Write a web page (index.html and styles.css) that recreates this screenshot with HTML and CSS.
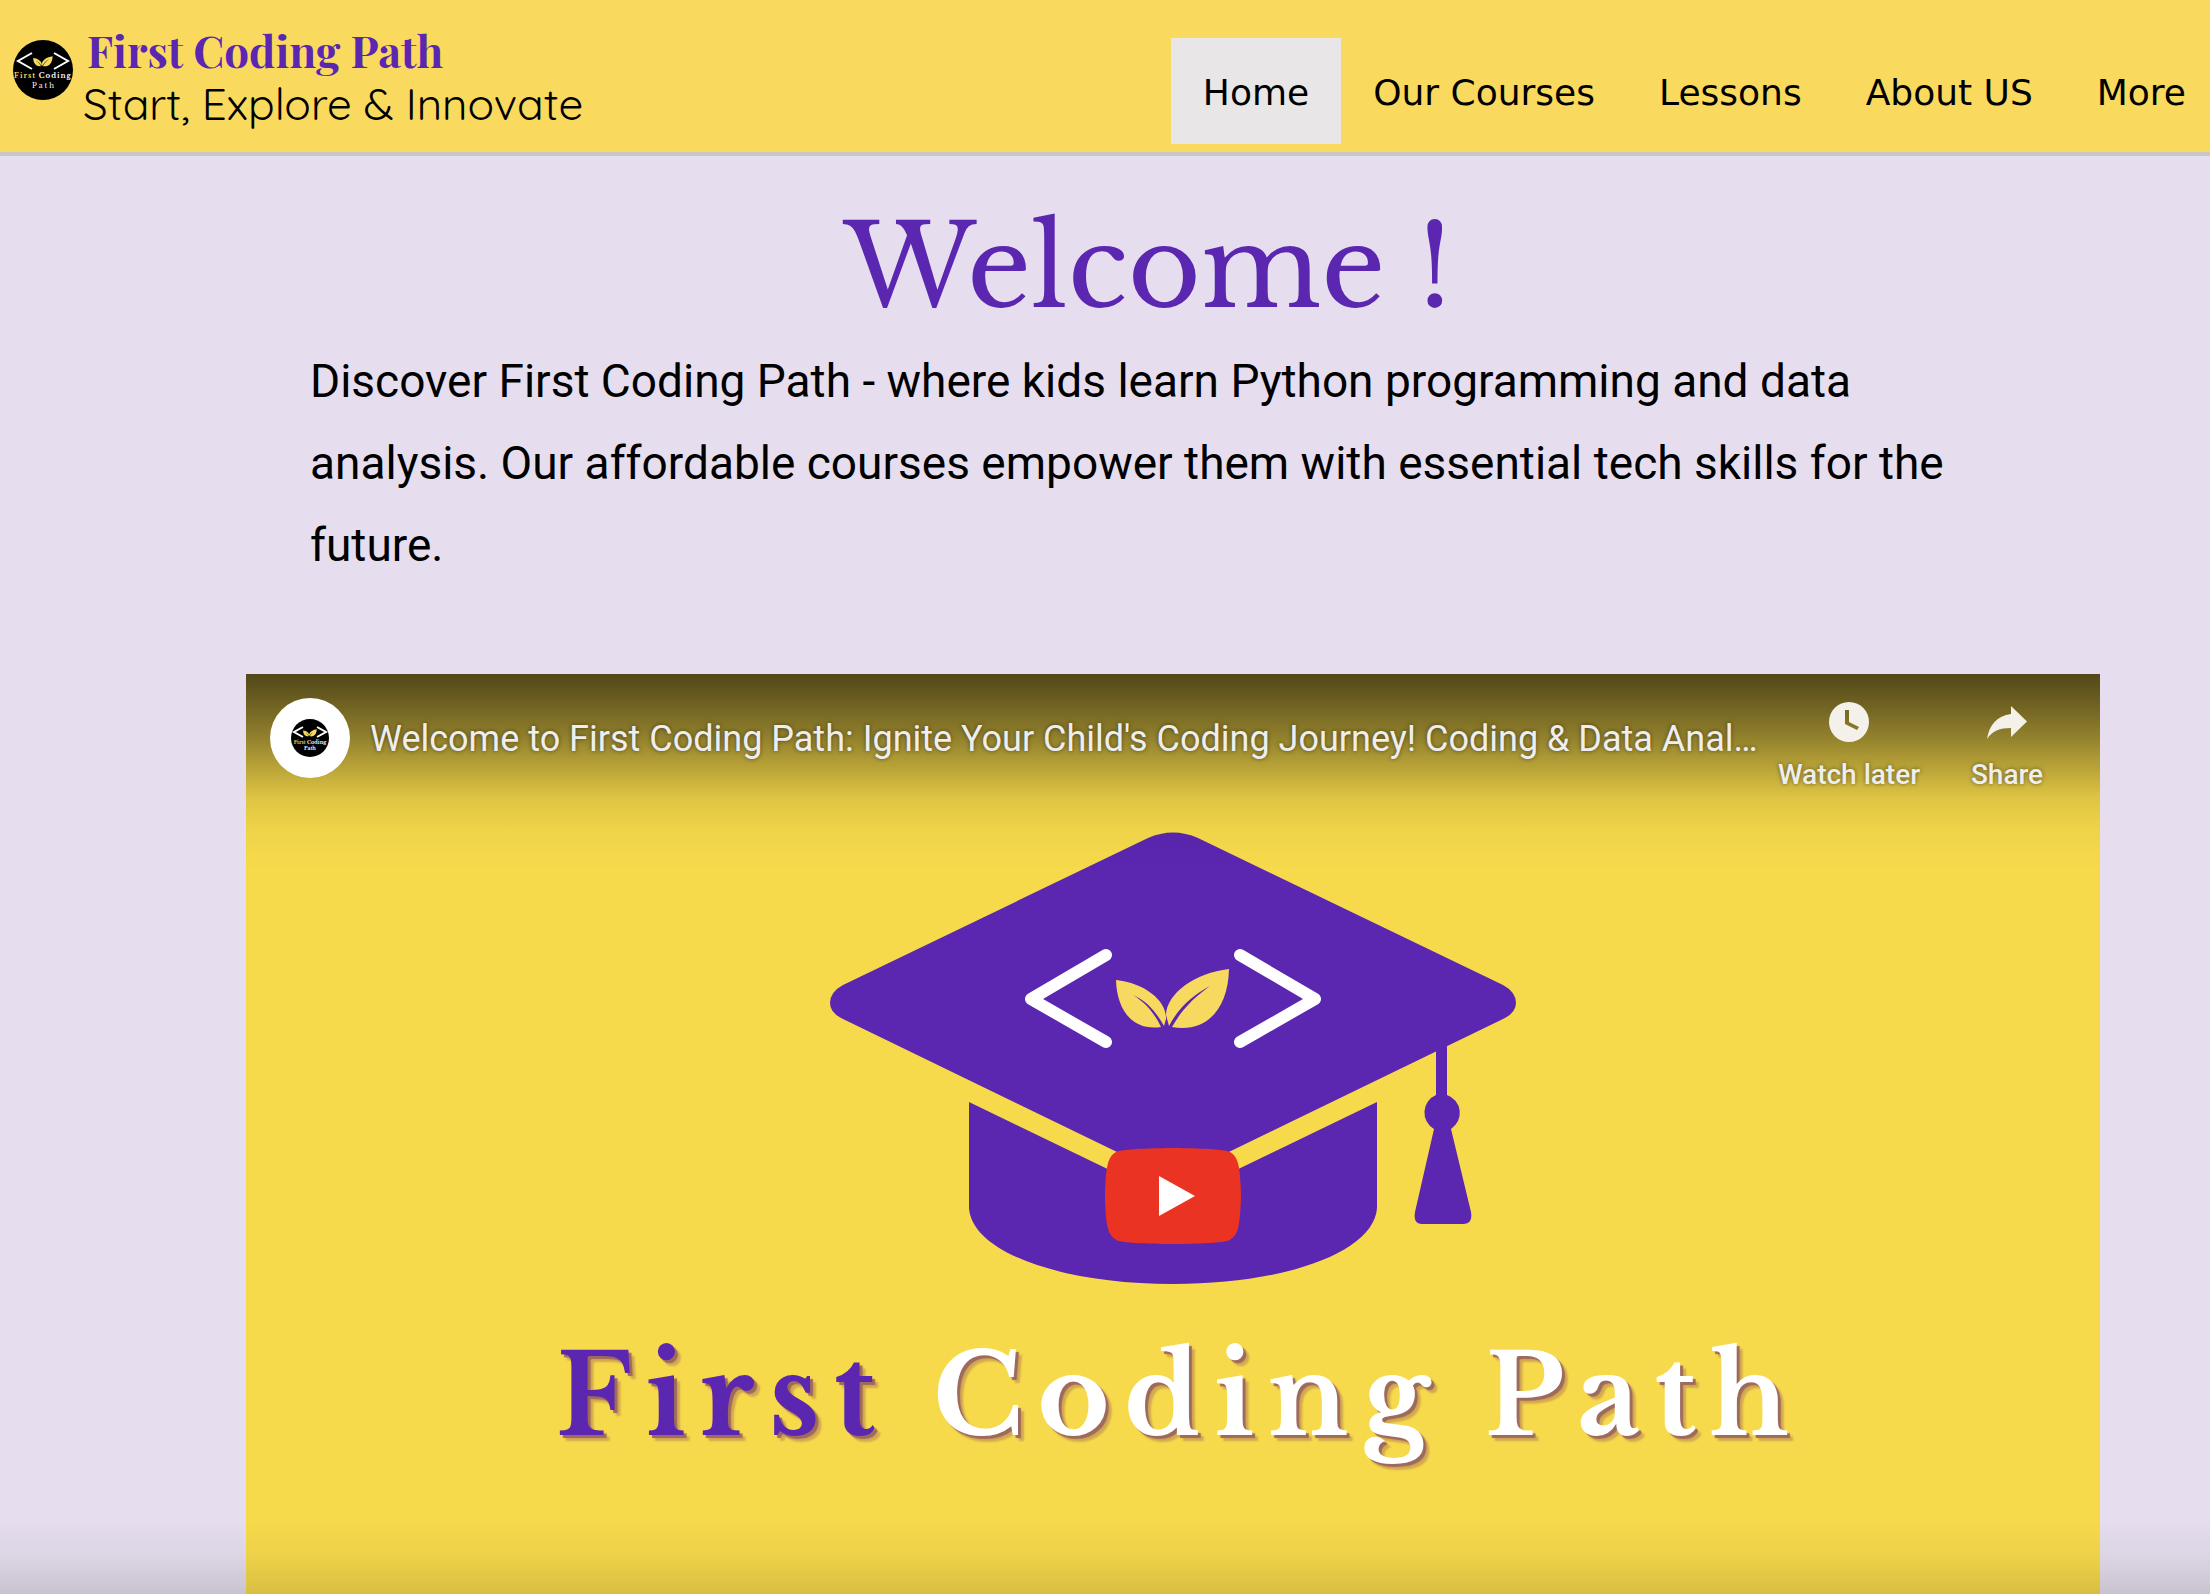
FILE: index.html
```html
<!DOCTYPE html>
<html lang="en">
<head>
<meta charset="utf-8">
<title>First Coding Path</title>
<link rel="stylesheet" href="styles.css">
</head>
<body>
<svg class="defs" aria-hidden="true">
  <symbol id="sprout" viewBox="0 0 116 62">
    <path d="M1 11C30 14 52 32 51 50L49 57C42 44 32 32 18 26C31 34 40 45 46 58C20 62 2 44 1 11Z"/>
    <path d="M114 0C80 4 52 24 51 46L54 57C64 38 78 26 95 17C78 29 66 42 57 58C90 64 113 42 114 0Z"/>
  </symbol>
</svg>
<header class="site-header">
  <a class="brand" href="#">
    <svg class="brand-logo" viewBox="0 0 60 60" aria-hidden="true">
      <circle cx="30" cy="30" r="30" fill="#000"/>
      <path d="M19 13L5 21L19 29M41 13L55 21L41 29" fill="none" stroke="#fff" stroke-width="2"/>
      <use href="#sprout" x="20" y="16" width="20" height="11" fill="#f8d95f"/>
      <text class="badge-text" x="30" y="38"><tspan fill="#f8d95f">First</tspan> Coding</text>
      <text class="badge-text badge-thin" x="31" y="48">Path</text>
    </svg>
    <span class="brand-words">
      <span class="brand-name">First Coding Path</span>
      <span class="brand-tagline">Start, Explore &amp; Innovate</span>
    </span>
  </a>
  <nav class="site-nav">
    <a class="nav-link is-current" href="#" aria-current="page">Home</a>
    <a class="nav-link" href="#">Our Courses</a>
    <a class="nav-link" href="#">Lessons</a>
    <a class="nav-link" href="#">About US</a>
    <a class="nav-link" href="#">More</a>
  </nav>
</header>
<main class="page">
  <h1 class="welcome">Welcome !</h1>
  <p class="intro">Discover First Coding Path - where kids learn Python programming and data analysis. Our affordable courses empower them with essential tech skills for the future.</p>
  <section class="video" aria-label="Video player">
    <svg class="poster" viewBox="0 0 1854 1043" role="img" aria-label="Graduation cap with the words First Coding Path">
      <g fill="#5b26b0">
        <path d="M902 164Q927 153 952 164L1257 311Q1270 318 1270 329Q1270 339 1257 345L952 493Q927 504 902 493L597 345Q584 339 584 329Q584 318 597 311Z"/>
        <path d="M723 428L903 515Q927 524 951 515L1131 428V534C1128 578 1040 610 927 610C814 610 726 578 723 534Z"/>
        <path d="M1190 365H1201V421A19 19 0 0 1 1205 455L1225 538Q1227 550 1217 550H1176Q1167 550 1169 538L1188 455A19 19 0 0 1 1190 421Z"/>
      </g>
      <path d="M860 281L785 325L860 368M994 281L1069 325L994 368" fill="none" stroke="#fff" stroke-width="12" stroke-linecap="round" stroke-linejoin="round"/>
      <use href="#sprout" x="869" y="295" width="116" height="62" fill="#f8d95f"/>
      <text class="poster-title" x="310" y="761"><tspan fill="#5b26b0">First</tspan> Coding Path</text>
    </svg>
    <div class="video-bar">
      <svg class="avatar" viewBox="0 0 80 80" aria-hidden="true">
        <circle cx="40" cy="40" r="40" fill="#fff"/>
        <circle cx="40" cy="40" r="19" fill="#000"/>
        <path d="M33 29L24 34L33 39M47 29L56 34L47 39" fill="none" stroke="#fff" stroke-width="2"/>
        <use href="#sprout" x="33" y="31" width="14" height="8" fill="#f8d95f"/>
        <text class="avatar-text" x="40" y="46"><tspan fill="#f8d95f">First</tspan> Coding</text>
        <text class="avatar-text" x="40" y="52">Path</text>
      </svg>
      <a class="video-title" href="#">Welcome to First Coding Path: Ignite Your Child's Coding Journey! Coding &amp; Data Analysis for Kids</a>
      <button class="video-action" type="button">
        <svg class="action-icon" viewBox="0 0 48 48" aria-hidden="true"><path fill-rule="evenodd" d="M24 4a20 20 0 1 0 0 40a20 20 0 1 0 0-40ZM20 12h4v12l10 5-2 3-12-6Z"/></svg>
        Watch later
      </button>
      <button class="video-action" type="button">
        <svg class="action-icon" viewBox="0 0 48 48" aria-hidden="true"><path d="M28 8L44 23.500L28 39V30C17 30 9 33 4 41C6 27 14 18 28 16Z"/></svg>
        Share
      </button>
    </div>
    <button class="play" type="button" aria-label="Play">
      <svg class="play-icon" viewBox="0 0 68 48" aria-hidden="true"><path fill="#ea3323" d="M66.520 7.740c-.78-2.930-2.490-5.410-5.420-6.190C55.790.130 34 0 34 0S12.210.130 6.900 1.550c-2.930.780-4.630 3.260-5.420 6.190C.060 13.050 0 24 0 24s.060 10.950 1.480 16.260c.780 2.930 2.490 5.410 5.420 6.190C12.210 47.870 34 48 34 48s21.790-.130 27.100-1.550c2.930-.780 4.640-3.260 5.420-6.190C67.940 34.950 68 24 68 24s-.060-10.950-1.480-16.260z"/><path fill="#fff" d="M45 24L27 14v20"/></svg>
    </button>
  </section>
</main>
</body>
</html>
```
FILE: styles.css
```css
* {
  box-sizing: border-box;
}

body {
  margin: 0;
  height: 100vh;
  overflow: hidden;
  background: #e6deee;
  color: #000;
  font-family: Roboto, sans-serif;
}

/* soft shade along the bottom edge of the window */
body::after {
  content: "";
  position: fixed;
  inset: auto 0 0;
  height: 76px;
  background: linear-gradient(transparent, rgb(0 0 0 / 4%) 50%, rgb(0 0 0 / 12%));
  pointer-events: none;
}

a {
  color: inherit;
  text-decoration: none;
}

button {
  border: 0;
  padding: 0;
  background: none;
  cursor: pointer;
}

.defs {
  position: absolute;
  width: 0;
  height: 0;
}

.badge-text {
  fill: #fff;
  font: bold 7px "Libre Baskerville", "Liberation Serif", serif;
  letter-spacing: 1px;
  text-anchor: middle;
}

.badge-thin {
  font-weight: normal;
  letter-spacing: 2px;
}

.avatar-text {
  fill: #fff;
  font: bold 5px "Libre Baskerville", "Liberation Serif", serif;
  text-anchor: middle;
}

.site-header {
  display: flex;
  justify-content: space-between;
  height: 156px;
  background: #f9d95e;
  border-bottom: 4px solid #c8c8c8;
}

.brand {
  display: flex;
  gap: 10px;
  padding: 24px 0 0 13px;
}

.brand-logo {
  width: 60px;
  height: 60px;
  margin-top: 16px;
}

.brand-words {
  display: flex;
  flex-direction: column;
  white-space: nowrap;
}

.brand-name {
  padding-left: 4px;
  color: #5b26b0;
  font: bold 44px/52px "Playfair Display", "Liberation Serif", serif;
}

.brand-tagline {
  font: 400 44px/56px Quicksand, Lato, sans-serif;
}

.site-nav {
  display: flex;
  align-items: flex-start;
  padding-top: 38px;
  margin-right: -8px;
}

.nav-link {
  padding: 34px 32px 30px;
  font: 36px/42px Verdana, "DejaVu Sans", sans-serif;
  white-space: nowrap;
}

.is-current {
  background: #e8e6e7;
}

.page {
  padding: 40px 120px 0 246px;
}

.welcome {
  margin: 0 40px 0 0;
  color: #5b26b0;
  font: 112px/144px "Libre Baskerville", "Liberation Serif", serif;
  text-align: center;
}

.intro {
  margin: 0 120px 88px 64px;
  font-size: 46px;
  line-height: 82px;
}

.video {
  position: relative;
  margin-right: -10px;
  background: #f7da4b;
}

.poster {
  display: block;
  width: 100%;
}

.poster-title {
  fill: #fff;
  font: bold 110px "Libre Baskerville", "Liberation Serif", serif;
  letter-spacing: 14px;
  text-shadow: 3px 3px 1px #9d6a5c, 6px 6px 2px #d4a951;
}

.video-bar {
  position: absolute;
  inset: 0 0 auto;
  display: flex;
  align-items: flex-start;
  height: 196px;
  padding: 24px 14px 0 24px;
  background: linear-gradient(rgb(0 0 0 / 67%), rgb(0 0 0 / 58%) 12%, rgb(0 0 0 / 43%) 30%, rgb(0 0 0 / 26%) 47%, rgb(0 0 0 / 10%) 63%, rgb(0 0 0 / 3%) 80%, transparent);
  color: #eee;
  text-shadow: 0 0 4px rgb(0 0 0 / 50%);
}

.avatar {
  flex: none;
  width: 80px;
  height: 80px;
}

.video-title {
  flex: 1;
  min-width: 0;
  margin-left: 20px;
  overflow: hidden;
  font-size: 36px;
  line-height: 82px;
  text-overflow: ellipsis;
  white-space: nowrap;
}

.video-action {
  display: flex;
  flex-direction: column;
  align-items: center;
  width: 158px;
  color: inherit;
  font: 500 28px/58px Roboto, sans-serif;
  text-shadow: inherit;
}

.action-icon {
  width: 48px;
  height: 48px;
  fill: #f3f1ea;
}

.play {
  position: absolute;
  inset: 0;
  margin: auto;
  width: 136px;
  height: 96px;
}

.play-icon {
  display: block;
  width: 100%;
}
```
